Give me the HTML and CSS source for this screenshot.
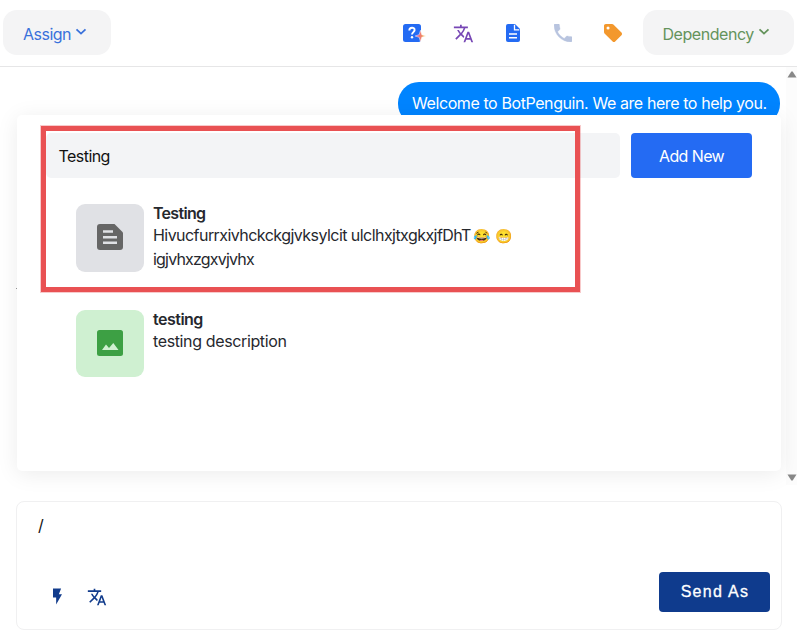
FILE: index.html
```html
<!DOCTYPE html>
<html lang="en">
<head>
<meta charset="utf-8">
<title>Chat inbox</title>
<link rel="stylesheet" href="styles.css">
</head>
<body>
<svg width="0" height="0" class="defs">
  <symbol id="translate" viewBox="0 0 24 24"><path fill="currentColor" d="M12.87 15.07l-2.54-2.51.03-.03A17.52 17.52 0 0 0 14.07 6H17V4h-7V2H8v2H1v1.99h11.17C11.5 7.92 10.44 9.75 9 11.35 8.07 10.32 7.3 9.19 6.69 8h-2c.73 1.63 1.73 3.17 2.98 4.56l-5.09 5.02L4 19l5-5 3.11 3.11.76-2.04zM18.5 10h-2L12 22h2l1.12-3h4.75L21 22h2l-4.5-12zm-2.62 7l1.62-4.33L19.12 17h-3.24z"/></symbol>
</svg>
<header class="toolbar">
  <button class="pill assign"><span>Assign</span><svg class="chevron" viewBox="0 0 12 8"><path d="M1.5 1.3 6 5.6l4.500-4.300"/></svg></button>
  <nav class="tools">
    <svg class="help" viewBox="0 0 24 20"><defs><linearGradient id="spark"><stop offset="0" stop-color="#d83aa8"/><stop offset=".5" stop-color="#ef7d72"/><stop offset="1" stop-color="#f2cf4a"/></linearGradient></defs><rect x="1" y="1" width="18" height="18" rx="2.500" fill="#246bf3"/><path d="M7.300 7.500c.1-3.700 5.500-3.500 5.300-.4-.1 2-2.600 2.100-2.600 4.500" fill="none" stroke="#fff" stroke-width="1.900"/><circle cx="10" cy="14.300" r="1.200" fill="#fff"/><path d="M18.500 7.300l1.300 4.400 4 1.300-4 1.300-1.300 4.400-1.300-4.400-4-1.300 4-1.300z" fill="url(#spark)" stroke="#fff" stroke-width=".5"/></svg>
    <svg class="translate" viewBox="0 0 24 24"><use href="#translate"/></svg>
    <svg class="note" viewBox="0 0 16 20"><path fill="#246bf3" d="M3 1h7l5 5v11a2 2 0 0 1-2 2H3a2 2 0 0 1-2-2V3a2 2 0 0 1 2-2z"/><path d="M9.500 1.800v5h4.800" fill="none" stroke="#fff" stroke-width="1.300"/><path d="M4 11h8M4 14.700h8" stroke="#fff" stroke-width="1.600"/></svg>
    <svg class="phone" viewBox="0 0 18 18"><path fill="#b8c4df" stroke="#b8c4df" stroke-width=".3" d="M3.620 7.790c1.440 2.830 3.760 5.140 6.590 6.590l2.200-2.200c.27-.27.67-.36 1.020-.24 1.120.37 2.330.57 3.570.57.550 0 1 .45 1 1V17c0 .55-.45 1-1 1C7.610 18 0 10.390 0 1c0-.55.45-1 1-1h3.500c.55 0 1 .45 1 1 0 1.250.2 2.450.57 3.570.11.350.03.740-.25 1.020l-2.200 2.200z"/></svg>
    <svg class="tag" viewBox="0 0 20 20"><path fill="#f3982d" d="M19.410 9.580l-9-9C10.050.22 9.550 0 9 0H2C.9 0 0 .9 0 2v7c0 .55.22 1.050.59 1.420l9 9c.36.36.86.58 1.410.58.550 0 1.050-.22 1.410-.59l7-7c.37-.36.59-.86.59-1.410 0-.55-.23-1.060-.59-1.420z"/><circle cx="4.500" cy="4.500" r="1.700" fill="#fff"/></svg>
  </nav>
  <button class="pill dependency"><span>Dependency</span><svg class="chevron" viewBox="0 0 12 8"><path d="M1.500 1.300 6 5.600l4.500-4.300"/></svg></button>
</header>
<main class="conversation">
  <div class="messages"><p class="bubble"><span>Welcome to BotPenguin. We are here to help you.</span></p><i class="tick"></i></div>
  <div class="scrollbar"><svg viewBox="0 0 10 7"><path d="M4.300.5h1.400L9.500 6.500h-9z"/></svg><svg viewBox="0 0 10 7"><path d="M4.300 6.500h1.400L9.500.5h-9z"/></svg></div>
  <section class="quick-replies">
    <div class="search-row">
      <div class="search"><span>Testing</span></div>
      <button class="add"><span>Add New</span></button>
    </div>
    <article class="reply">
      <div class="thumb doc"><svg viewBox="0 0 26 26"><path fill="#666" d="M3 0h14.500L26 8.500V23a3 3 0 0 1-3 3H3a3 3 0 0 1-3-3V3a3 3 0 0 1 3-3z"/><path d="M6 7.500h10M6 13.200h14M6 18.700h14" stroke="#e0e1e5" stroke-width="2.500"/></svg></div>
      <div class="copy"><h2 class="t1">Testing</h2><p><span class="long">Hivucfurrxivhckckgjvksylcit ulclhxjtxgkxjfDhT</span><span class="emoji">😂</span><span class="emoji">😁</span><br><span class="second">igjvhxzgxvjvhx</span></p></div>
    </article>
    <article class="reply">
      <div class="thumb picture"><svg viewBox="0 0 26 26"><rect width="26" height="26" rx="2.500" fill="#3da044"/><path fill="#cff0d1" d="M5 20l4-5.500 3 3.500 4.300-5L21.500 20z"/></svg></div>
      <div class="copy"><h2 class="t2">testing</h2><p><span class="desc">testing description</span></p></div>
    </article>
  </section>
  <div class="highlight"></div>
</main>
<footer class="composer">
  <div class="draft">/</div>
  <div class="actions">
    <svg class="bolt" viewBox="0 0 10 18"><path fill="#123c8c" d="M0 0h9L6.500 6.500H10L3.500 18v-8H0z"/></svg>
    <svg class="translate" viewBox="0 0 24 24"><use href="#translate"/></svg>
    <button class="send"><span>Send As</span></button>
  </div>
</footer>
</body>
</html>
```
FILE: styles.css
```css
* { box-sizing: border-box; }
body { margin: 0; width: 797px; height: 635px; overflow: hidden; background: #fff; color: #26282e; font: 16px/24px Inter, sans-serif; display: flex; flex-direction: column; }
button { border: 0; padding: 0; font: inherit; display: flex; align-items: center; }
h2, p { margin: 0; }
span { white-space: nowrap; }
.defs { position: absolute; }
.toolbar { height: 67px; flex: none; border-bottom: 1px solid #e6e6e7; display: flex; align-items: center; padding: 0 3px 2px; justify-content: space-between; }
.pill { height: 45px; border-radius: 14px; background: #f4f4f5; padding: 3px 24px 0 20px; gap: 4px; }
.assign { width: 108px; color: #3971db; }
.dependency { width: 151px; color: #64935b; }
.assign span { letter-spacing: -.5px; }
.dependency span { letter-spacing: -.45px; margin-left: -.5px; }
.chevron { width: 12px; height: 8px; flex: none; margin-bottom: 3px; fill: none; stroke: currentColor; stroke-width: 1.8; }
.tools { display: flex; align-items: center; margin-left: auto; margin-right: 21px; padding-top: 2px; }
.help { width: 24px; height: 20px; margin-right: 27px; }
.tools .translate { width: 21px; height: 21px; color: #7747b5; margin-right: 31px; }
.note { width: 16px; height: 20px; margin-right: 33px; }
.phone { width: 18px; height: 18px; margin-right: 32px; }
.tag { width: 18px; height: 18px; }
.conversation { position: relative; height: 418px; flex: none; display: flex; }
.messages { flex: 1; padding: 15px 6px 0 16px; display: flex; flex-direction: column; align-items: flex-end; }
.bubble { width: 382px; height: 43px; border-radius: 21px; background: #0084ff; color: #fff; padding: 9px 14px; }
.bubble span { letter-spacing: -.41px; }
.tick { width: 1px; height: 1px; background: #999; align-self: flex-start; margin-top: 163px; }
.scrollbar { width: 11px; background: #fcfcfc; padding: 4px 0 4px 1px; display: flex; flex-direction: column; justify-content: space-between; }
.scrollbar svg { width: 10px; height: 7px; fill: #888; display: block; }
.quick-replies { position: absolute; left: 17px; top: 48px; width: 764px; height: 356px; background: #fff; border-radius: 5px; box-shadow: 0 3px 22px rgba(0,0,0,.08); padding: 18px 29px; }
.search-row { display: flex; gap: 11px; }
.search { width: 574px; height: 45px; border-radius: 5px; background: #f3f4f6; color: #111; padding: 11px 12.5px 0; letter-spacing: -.55px; }
.add { width: 121px; height: 45px; border-radius: 4px; background: #246bf3; color: #fff; justify-content: center; padding-top: 1px; letter-spacing: -.6px; }
.reply { display: flex; gap: 9px; height: 68px; margin: 26px 0 38px 30px; }
.reply + .reply { margin-top: 0; }
.thumb { width: 68px; height: 68px; border-radius: 9px; display: grid; place-items: center; padding-bottom: 2px; }
.thumb svg { width: 26px; height: 26px; }
.doc { background: #e0e1e5; }
.picture { background: #cff0d1; height: 67px; }
.copy { margin-top: -1px; }
.copy h2 { font-size: 16px; line-height: 20px; font-weight: 600; }
.copy p { line-height: 24px; }
.t1 { letter-spacing: -.7px; }
.t2 { letter-spacing: -.5px; }
.long { letter-spacing: -.55px; }
.second { letter-spacing: -.8px; }
.desc { letter-spacing: -.37px; }
.emoji { display: inline-block; width: 22px; font: 14px/20px "Noto Color Emoji", sans-serif; text-align: center; }
.highlight { position: absolute; left: 41px; top: 59px; width: 539px; height: 166px; border: 5px solid #e95153; box-shadow: 0 0 0 1px rgba(233,81,83,.3); pointer-events: none; }
.composer { width: 766px; height: 129px; margin: 16px 0 0 16px; border: 1px solid #f0f0f1; border-radius: 8px; padding: 11px 11px 17px 21px; display: flex; flex-direction: column; justify-content: space-between; }
.draft { color: #111; }
.actions { display: flex; align-items: center; color: #123c8c; padding-left: 15px; }
.bolt { width: 9px; height: 17px; margin: 8px 25px 0 0; }
.actions .translate { width: 20px; height: 20px; margin-top: 9px; }
.send { width: 111px; height: 40px; border-radius: 4px; background: #0f3b8d; color: #fff; margin-left: auto; justify-content: center; font: 16px/20px "Liberation Sans", sans-serif; letter-spacing: 1.3px; padding-left: 1px; -webkit-text-stroke: .3px #fff; }
```
